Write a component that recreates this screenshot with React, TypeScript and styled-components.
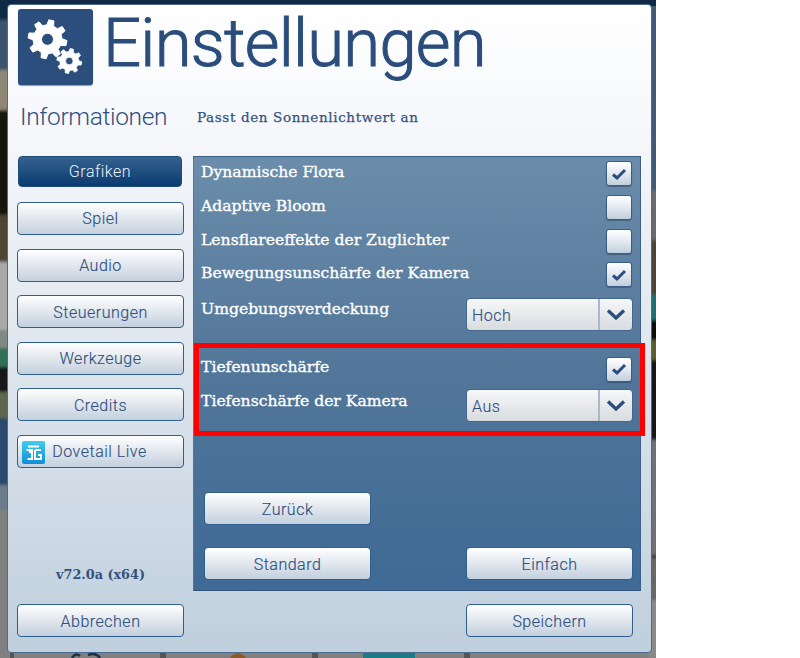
import React from "react";
import styled, { createGlobalStyle } from "styled-components";

const Global = createGlobalStyle`
  html, body { margin: 0; padding: 0; background: #fff; }
  #root { width: 800px; height: 658px; overflow: hidden; }
`;

const UI = `"Roboto", "Liberation Sans", sans-serif`;
const SERIF = `"DejaVu Serif", "Liberation Serif", serif`;

const Backdrop = styled.div`
  position: relative;
  width: 656px;
  height: 658px;
  padding: 4px 4px 5px 7px;
  box-sizing: border-box;
  overflow: hidden;
`;
const Scene = styled.svg`
  position: absolute;
  inset: 0;
  width: 656px;
  height: 658px;
`;
const Dialog = styled.div`
  position: relative;
  width: 645px;
  height: 649px;
  box-sizing: border-box;
  border: 1px solid #4f6c90;
  border-radius: 4px;
  background: linear-gradient(180deg, #ffffff 0%, #f4f6fa 22%, #c0cfdd 100%);
  padding: 4px 9px 0;
`;
const Header = styled.header`
  display: flex;
  align-items: flex-start;
  height: 76px;
  margin-left: 1px;
`;
const Tile = styled.div`
  width: 75px;
  height: 76px;
  border-radius: 3px;
  background: #2b4e7d;
  box-shadow: 0 1px 1px rgba(40, 60, 90, 0.5);
  flex: none;
`;
const Title = styled.h1`
  margin: 0 0 0 10px;
  font: 300 67px/68px ${UI};
  letter-spacing: -0.75px;
  color: #2a4d7c;
  -webkit-text-stroke: 1px #2a4d7c;
`;
const InfoLine = styled.div`
  display: flex;
  align-items: center;
  height: 35px;
  margin: 14px 0 22px 3px;
`;
const InfoTitle = styled.h2`
  margin: 0;
  width: 177px;
  font: 300 24.5px/30px ${UI};
  letter-spacing: -0.35px;
  color: #2f5180;
`;
const InfoText = styled.span`
  font: 400 13.5px/20px ${SERIF};
  letter-spacing: 0.63px;
  color: #34537f;
  -webkit-text-stroke: 0.25px #34537f;
`;
const Body = styled.div`
  display: grid;
  grid-template-columns: 167px 448px;
  grid-template-rows: 435px 33px;
  column-gap: 9px;
  row-gap: 13px;
`;
const Sidebar = styled.nav`
  display: flex;
  flex-direction: column;
  gap: 13.6px;
`;
const Button = styled.button<{ $active?: boolean }>`
  display: flex;
  align-items: center;
  justify-content: center;
  position: relative;
  width: 167px;
  height: 33px;
  flex: none;
  padding: 2px 0 0;
  box-sizing: border-box;
  border: 1px solid #2f5f8c;
  border-radius: 4px;
  background: linear-gradient(180deg, #ffffff 0%, #e4e9ef 45%, #c3d0de 100%);
  font: 300 16px/20px ${UI};
  letter-spacing: 0.5px;
  color: #2f5080;
  -webkit-text-stroke: 0.15px #2f5080;
  ${(p) =>
    p.$active &&
    `
    width: 164px;
    height: 31px;
    margin: 0 0 1.4px 1px;
    padding: 0;
    border-color: #1f4b7c;
    background: linear-gradient(180deg, #35628f 0%, #0a3b70 100%);
    color: #eef3f8;
    -webkit-text-stroke: 0;
  `}
`;
const LiveIcon = styled.svg`
  position: absolute;
  left: 4px;
  top: 5px;
  width: 23px;
  height: 23px;
`;
const LiveText = styled.span`
  margin-right: 2px;
`;
const Version = styled.div`
  margin-top: auto;
  margin-bottom: 6px;
  text-align: center;
  font: 700 12.8px/20px ${SERIF};
  color: #33527d;
`;
const Panel = styled.section`
  display: flex;
  flex-direction: column;
  box-sizing: border-box;
  border: 1px solid #3c5f87;
  border-left-color: #58749a;
  border-bottom-color: #2f5279;
  background: linear-gradient(180deg, #6b8dab 0%, #527699 50%, #3e6a95 100%);
  padding: 0 7px 10px;
`;
const Row = styled.div<{ $top?: number }>`
  display: flex;
  align-items: center;
  justify-content: space-between;
  height: 33.7px;
  flex: none;
  margin-top: ${(p) => p.$top ?? 0}px;
`;
const Label = styled.span<{ $lift?: number }>`
  padding-bottom: ${(p) => p.$lift ?? 3}px;
  font: 400 15.6px/20px ${SERIF};
  color: #ffffff;
  -webkit-text-stroke: 0.35px #fff;
`;
const Check = styled.span`
  display: flex;
  align-items: center;
  justify-content: center;
  width: 26px;
  height: 25px;
  margin-right: 1px;
  box-sizing: border-box;
  border: 1px solid #3a5c85;
  border-radius: 3px;
  background: linear-gradient(180deg, #ffffff 0%, #e6ebf1 45%, #c2cfdd 100%);
  box-shadow: 0 1px 1px rgba(30, 50, 80, 0.4);
`;
const Select = styled.div`
  display: flex;
  align-items: stretch;
  width: 167px;
  height: 33px;
  box-sizing: border-box;
  border: 1px solid #44668f;
  border-radius: 4px;
  background: linear-gradient(180deg, #f6f7f8 0%, #d8dcdf 100%);
`;
const SelectValue = styled.span`
  flex: 1;
  display: flex;
  align-items: center;
  padding: 2px 0 0 5px;
  font: 300 16px/20px ${UI};
  letter-spacing: 0.5px;
  color: #2f5080;
  -webkit-text-stroke: 0.15px #2f5080;
`;
const SelectArrow = styled.span`
  width: 32px;
  display: flex;
  align-items: center;
  justify-content: center;
  border-left: 2px solid #a9b8c9;
`;
const ButtonRows = styled.div`
  margin-top: auto;
  display: flex;
  flex-direction: column;
  gap: 22px;
`;
const ButtonRow = styled.div`
  display: flex;
  justify-content: space-between;
  padding-left: 3px;
`;
const Footer = styled.div`
  display: flex;
  justify-content: flex-end;
  padding-right: 8px;
`;
const Highlight = styled.div`
  position: absolute;
  left: 186px;
  top: 338px;
  width: 451px;
  height: 93px;
  box-sizing: border-box;
  border: 5px solid #ff0000;
  pointer-events: none;
`;

function gearPath(cx: number, cy: number, R: number, r: number, hole: number, teeth: number) {
  const pts: string[] = [];
  const step = (Math.PI * 2) / teeth;
  for (let i = 0; i < teeth; i++) {
    const a = i * step - Math.PI / 2 + 0.2;
    const seq: [number, number][] = [
      [r, a - step * 0.3],
      [R, a - step * 0.17],
      [R, a + step * 0.17],
      [r, a + step * 0.3],
    ];
    for (const [rad, ang] of seq) {
      pts.push(`${(cx + rad * Math.cos(ang)).toFixed(2)} ${(cy + rad * Math.sin(ang)).toFixed(2)}`);
    }
  }
  const ring = `M${cx - hole} ${cy}a${hole} ${hole} 0 1 0 ${hole * 2} 0a${hole} ${hole} 0 1 0 ${-hole * 2} 0Z`;
  return `M${pts.join("L")}Z${ring}`;
}

const Gears = () => (
  <svg width="75" height="76" viewBox="18 9 75 76">
    <path fill="#fff" fillRule="evenodd" stroke="#fff" strokeWidth="1" strokeLinejoin="round" d={gearPath(47.5, 39.3, 19.5, 14.5, 6, 8)} />
    <path fill="#fff" fillRule="evenodd" stroke="#fff" strokeWidth="0.8" strokeLinejoin="round" d={gearPath(69.3, 61, 12.5, 9.5, 3.8, 8)} />
  </svg>
);

const CheckMark = () => (
  <svg width="16" height="14" viewBox="0 0 16 14">
    <path d="M2 7.5 L6 11 L14 3" fill="none" stroke="#2b4e7d" strokeWidth="3" />
  </svg>
);
const Chevron = () => (
  <svg width="20" height="13" viewBox="0 0 20 13">
    <path d="M2 2.5 L10 10 L18 2.5" fill="none" stroke="#2b4e7d" strokeWidth="3.4" />
  </svg>
);

const leftBands: [number, number, string][] = [
  [0, 20, "#0f2a44"], [20, 70, "#3a5570"], [70, 110, "#8f8676"], [110, 215, "#14120f"],
  [215, 262, "#4f4436"], [262, 330, "#a9aaa7"], [330, 348, "#7f8a84"], [348, 367, "#2f6f54"],
  [367, 392, "#15171a"], [392, 418, "#5f6650"], [418, 485, "#2c4a6c"], [485, 510, "#6b7c8e"],
  [510, 658, "#808080"],
];
const rightBands: [number, number, string][] = [
  [0, 190, "#3f5a78"], [190, 240, "#6a6a68"], [240, 295, "#4b4438"], [295, 320, "#1f6f72"],
  [320, 340, "#0d0d0d"], [340, 360, "#5c5c30"], [360, 440, "#14161c"], [440, 555, "#6f7176"],
  [555, 558, "#333"], [558, 600, "#66686c"], [600, 658, "#8a8a8a"],
];

const Scenery = () => (
  <Scene viewBox="0 0 656 658">
    <defs>
      <filter id="soft"><feGaussianBlur stdDeviation="1.5" /></filter>
    </defs>
    <rect width="656" height="658" fill="#808080" />
    <g filter="url(#soft)">
      {leftBands.map(([a, b, c]) => <rect key={a} x="-4" y={a} width="14" height={b - a} fill={c} />)}
      {rightBands.map(([a, b, c]) => <rect key={a} x="648" y={a} width="12" height={b - a} fill={c} />)}
    </g>
    <rect x="0" y="0" width="656" height="6" fill="#102a45" />
    <rect x="10" y="650" width="4" height="8" fill="#555" />
    <rect x="160" y="650" width="6" height="8" fill="#555" />
    <path d="M72 658 q4 -6 8 -2 M88 655 q8 -3 12 3" stroke="#1c3146" strokeWidth="2.5" fill="none" />
    <path d="M230 658 q8 -10 16 0Z" fill="#8b5a2b" />
    <rect x="312" y="650" width="6" height="8" fill="#555" />
    <rect x="363" y="650" width="52" height="8" fill="#1b7c85" />
    <rect x="464" y="650" width="6" height="8" fill="#555" />
  </Scene>
);

const Setting = ({ label, lift, top, children }: { label: string; lift?: number; top?: number; children: React.ReactNode }) => (
  <Row $top={top}>
    <Label $lift={lift}>{label}</Label>
    {children}
  </Row>
);

const Dropdown = ({ value }: { value: string }) => (
  <Select>
    <SelectValue>{value}</SelectValue>
    <SelectArrow><Chevron /></SelectArrow>
  </Select>
);

export default function App() {
  return (
    <>
      <Global />
      <Backdrop>
        <Scenery />
        <Dialog>
          <Header>
            <Tile><Gears /></Tile>
            <Title>Einstellungen</Title>
          </Header>
          <InfoLine>
            <InfoTitle>Informationen</InfoTitle>
            <InfoText>Passt den Sonnenlichtwert an</InfoText>
          </InfoLine>
          <Body>
            <Sidebar>
              <Button $active>Grafiken</Button>
              <Button>Spiel</Button>
              <Button>Audio</Button>
              <Button>Steuerungen</Button>
              <Button>Werkzeuge</Button>
              <Button>Credits</Button>
              <Button>
                <LiveIcon viewBox="0 0 23 23">
                  <defs>
                    <linearGradient id="live" x1="0" y1="0" x2="0" y2="1">
                      <stop offset="0" stopColor="#3fcdf2" />
                      <stop offset="1" stopColor="#0e8edb" />
                    </linearGradient>
                  </defs>
                  <rect width="23" height="23" rx="2" fill="url(#live)" />
                  <path d="M6 5.5H17M4.5 9H10V18H5.5M8 9V12M13 9H19M13 9V18H19V14H16" fill="none" stroke="#fff" strokeWidth="2" />
                </LiveIcon>
                <LiveText>Dovetail Live</LiveText>
              </Button>
              <Version>v72.0a (x64)</Version>
            </Sidebar>
            <Panel>
              <Setting label="Dynamische Flora"><Check><CheckMark /></Check></Setting>
              <Setting label="Adaptive Bloom"><Check /></Setting>
              <Setting label="Lensflareeffekte der Zuglichter"><Check /></Setting>
              <Setting label="Bewegungsunschärfe der Kamera"><Check><CheckMark /></Check></Setting>
              <Setting label="Umgebungsverdeckung" lift={12} top={6}><Dropdown value="Hoch" /></Setting>
              <Setting label="Tiefenunschärfe" lift={4} top={21}><Check><CheckMark /></Check></Setting>
              <Setting label="Tiefenschärfe der Kamera" lift={10} top={3}><Dropdown value="Aus" /></Setting>
              <ButtonRows>
                <ButtonRow><Button>Zurück</Button></ButtonRow>
                <ButtonRow>
                  <Button>Standard</Button>
                  <Button>Einfach</Button>
                </ButtonRow>
              </ButtonRows>
            </Panel>
            <Button>Abbrechen</Button>
            <Footer><Button>Speichern</Button></Footer>
          </Body>
          <Highlight />
        </Dialog>
      </Backdrop>
    </>
  );
}
